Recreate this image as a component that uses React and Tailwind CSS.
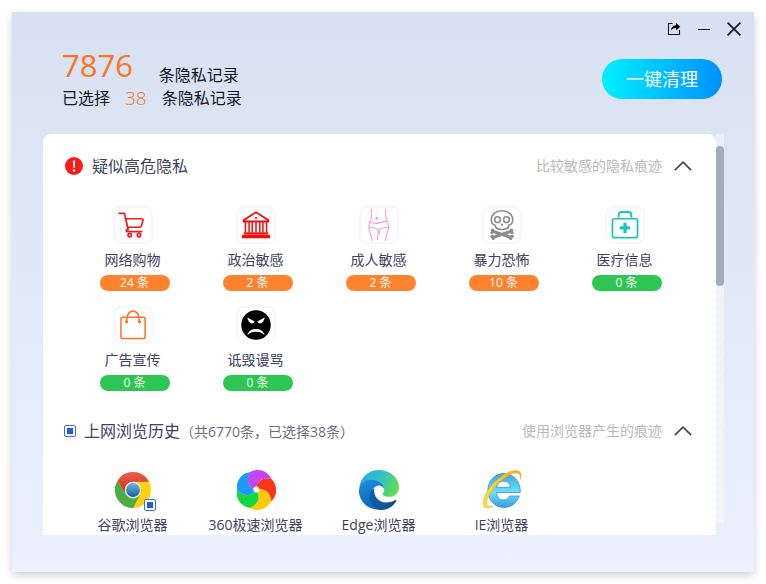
import React from "react";

/* ---------- line icons, 40 x 38 tiles ---------- */

const CartIcon = () => (
  <svg viewBox="0 0 40 38" className="h-full w-full" fill="none" stroke="#e81d1a" strokeWidth="1.900" strokeLinecap="round" strokeLinejoin="round">
    <path d="M4.500 6h5.200c.5 0 .8.300.9.700L14.500 24" />
    <path d="M12.300 12h17.200c1.300 0 1.900.8 1.600 2l-1.600 5.600c-.4 1.300-1.200 1.900-2.600 1.900H14.500" />
    <path d="M14.300 24c-1.400.1-2 .7-1.900 1.500.1.600.6.900 1.300.9h16.100" />
    <circle cx="16.300" cy="30.300" r="1.900" />
    <circle cx="26.700" cy="30.300" r="1.900" />
  </svg>
);

const InstitutionIcon = () => (
  <svg viewBox="0 0 40 38" className="h-full w-full" fill="none" stroke="#fb0a0a" strokeWidth="1.700" strokeLinejoin="round">
    <path d="M20 4.800 34 13.600v1.500H6v-1.500z" strokeWidth="2" />
    <circle cx="20" cy="11" r="1.300" fill="#fb0a0a" stroke="none" />
    <path d="M8.200 15.500v11.800M12.300 15.500v11.800M15.800 15.500v11.800M20 15.500v11.800M24.200 15.500v11.800M27.700 15.500v11.800M31.800 15.500v11.800" />
    <path d="M6.500 28.200h27" strokeWidth="2" />
    <path d="M5.300 30.300h29.400l.7 2.800H4.600z" fill="#fb0a0a" strokeWidth="1.200" />
  </svg>
);

const BodyIcon = () => (
  <svg viewBox="0 0 40 38" className="h-full w-full" fill="none" stroke="#fb9fd2" strokeWidth="1.300" strokeLinecap="round">
    <path d="M11.300 1.500c.8 6 .6 9.500-1 13-1.900 4-1.900 7.800-.8 11.500 1.100 3.500 2.400 6.500 2.700 10" />
    <path d="M27.700 1.500c-.8 6-.4 9.500 1.400 13 1.900 4 1.800 7.800.7 11.500-1 3.500-2.300 6.500-2.600 10" />
    <path d="M10 15c3.200 2.300 7.400 2.700 11 1.300 2.600-1 5.100-1 8.200-1.700" />
    <path d="M9 21.600c4.300-.4 8.400.9 10.700 3.900 2.400-3 6-4.300 10.500-3.900" />
    <path d="M19.300 25.500c-.7 3.500-1.200 6.300-1 10M19.900 25.500c.9 1 .9 2 .6 3.500" />
    <circle cx="17.500" cy="11.500" r="1" fill="#fb9fd2" />
  </svg>
);

const SkullIcon = () => (
  <svg viewBox="0 0 40 38" className="h-full w-full" fill="none" stroke="#8d8d8d" strokeWidth="1.800" strokeLinejoin="round">
    <path d="M20 3c-7 0-12 4.500-12 10.300 0 3.300 1.700 5.100 4.400 6.100.3 3 3 4.600 7.600 4.600s7.300-1.600 7.600-4.600c2.700-1 4.400-2.800 4.400-6.100C32 7.500 27 3 20 3z" />
    <circle cx="15" cy="13" r="3.200" />
    <circle cx="25" cy="13" r="3.200" />
    <circle cx="20" cy="18.600" r="1.300" fill="#8d8d8d" stroke="none" />
    <path d="M9.500 26 30.500 33M30.500 26 9.500 33" strokeWidth="3.400" />
    <g fill="#8d8d8d" stroke="none">
      <circle cx="9.500" cy="24.800" r="1.900" /><circle cx="8.700" cy="27.500" r="1.800" />
      <circle cx="30.500" cy="24.800" r="1.900" /><circle cx="31.300" cy="27.500" r="1.800" />
      <circle cx="8.700" cy="31.600" r="1.800" /><circle cx="10.200" cy="34" r="1.800" />
      <circle cx="31.300" cy="31.600" r="1.800" /><circle cx="29.800" cy="34" r="1.800" />
    </g>
  </svg>
);

const MedicalIcon = () => (
  <svg viewBox="0 0 40 38" className="h-full w-full" fill="none" stroke="#18c5c2" strokeWidth="1.900" strokeLinejoin="round">
    <rect x="6" y="12" width="28" height="21" rx="2" />
    <path d="M13 10.600V7.500c0-2 1-3 3-3h8c2 0 3 1 3 3v3.100" strokeWidth="2.200" />
    <path d="M20 16.500v11.600M14.200 22.300h11.600" strokeWidth="3.600" />
  </svg>
);

const BagIcon = () => (
  <svg viewBox="0 0 40 38" className="h-full w-full" fill="none" stroke="#ff7327" strokeWidth="1.700" strokeLinecap="round" strokeLinejoin="round">
    <rect x="6.500" y="10.300" width="27" height="23.800" rx="2" />
    <path d="M12.800 15c.2-7.500 2.800-11.500 7.200-11.500s7 4 7.200 11.500" />
    <circle cx="12.800" cy="15.500" r="1" fill="#ff7327" />
    <circle cx="27.200" cy="15.500" r="1" fill="#ff7327" />
  </svg>
);

const AngryIcon = () => (
  <svg viewBox="0 0 40 38" className="h-full w-full">
    <circle cx="20" cy="19" r="16.500" fill="#000" />
    <path d="M10.300 10.500l8.200 4.500c-.5 1.500-1.600 2.300-3.200 2.200-2.600-.2-4.300-3.100-5-6.700zM29.700 10.500l-8.200 4.500c.5 1.500 1.600 2.300 3.200 2.200 2.600-.2 4.300-3.100 5-6.700z" fill="#fff" />
    <path d="M10.300 30.500c1.500-5 4.900-7 9.700-7s8.200 2 9.700 7c-2.500-2.800-5.700-4-9.700-4s-7.200 1.200-9.700 4z" fill="#fff" />
  </svg>
);

/* ---------- browser logos, 40 x 40 ---------- */

const ChromeLogo = () => (
  <svg viewBox="0 0 40 40" className="h-10 w-10">
    <defs>
      <linearGradient id="cr" x1="0" y1="0" x2="0" y2="1"><stop offset="0" stopColor="#e8604f" /><stop offset="1" stopColor="#d8261d" /></linearGradient>
      <linearGradient id="cb" x1="0" y1="0" x2="0" y2="1"><stop offset="0" stopColor="#77b2e2" /><stop offset="1" stopColor="#165fa5" /></linearGradient>
    </defs>
    <circle cx="20" cy="20" r="18" fill="#fcd213" />
    <path d="M4.400 11A18 18 0 0 1 35.600 11L36 12H20A8.200 8.200 0 0 0 12.600 23.500z" fill="url(#cr)" />
    <path d="M4.400 11A18 18 0 0 0 20 38L27.500 24A8.200 8.200 0 0 1 12.900 24z" fill="#4aae48" />
    <path d="M35.600 11.800H20v3h17.200z" fill="#fcd213" />
    <circle cx="20" cy="20" r="8.200" fill="#eef0f2" />
    <circle cx="20" cy="20" r="6.900" fill="url(#cb)" />
  </svg>
);

const blades = [
  { angle: 0, color: "#c246f3" },
  { angle: 72, color: "#ff351c" },
  { angle: 144, color: "#ffc90a" },
  { angle: 216, color: "#13d73f" },
  { angle: 288, color: "#1b9afa" },
];

const PinwheelLogo = () => (
  <svg viewBox="0 0 40 40" className="h-10 w-10">
    {blades.map((b) => (
      <path
        key={b.color}
        d="M20 20C13 18 9 11 14.300 1.900C22-2 31.500.5 35.450 9C25.200 6.800 19.700 12.700 20 20z"
        fill={b.color}
        transform={`rotate(${b.angle} 20 20)`}
      />
    ))}
    <circle cx="20.300" cy="19.500" r="3" fill="#fff" />
  </svg>
);

const EdgeLogo = () => (
  <svg viewBox="0 0 40 40" className="h-10 w-10">
    <defs>
      <linearGradient id="eg" x1="0" y1=".3" x2="1" y2=".6"><stop offset="0" stopColor="#27a9e5" /><stop offset=".5" stopColor="#33c3c5" /><stop offset="1" stopColor="#63dd4b" /></linearGradient>
      <linearGradient id="eb" x1="0" y1="0" x2=".3" y2="1"><stop offset="0" stopColor="#1c8fdd" /><stop offset="1" stopColor="#0c68bd" /></linearGradient>
      <linearGradient id="ed" x1="0" y1="0" x2="1" y2="1"><stop offset="0" stopColor="#0c66b5" /><stop offset="1" stopColor="#124a8c" /></linearGradient>
    </defs>
    <path d="M.2 18C1.200 7.500 9.500 0 20 0c11.500 0 20 8 20 17.200 0 6-4.500 9.600-10 9.600-4.300 0-6.400-1.400-6.400-2.700 0-.8 1.600-1.500 1.600-4.700 0-4.500-5-9.500-12.500-9.500C7 9.900 2 13 .2 18z" fill="url(#eg)" />
    <path d="M.1 19.500C.8 13 6.500 9.700 12.700 9.700c8.300 0 12.500 5.500 12.500 9.400-1-2.300-3-3.700-5.300-3.700-4 .2-7.900 4.200-7.900 9.800 0 7 5.500 12.500 12.800 13.900C10.800 42.500-.7 32-.1 19.500z" fill="url(#eb)" />
    <path d="M15.300 18c-1.200 8.200 4.200 14.500 12 14.500 3.700 0 6.600-1 9-2.400.8-.4 1.500.3 1 1.100-3 5-8.700 8.700-14.300 8.700-7 0-12.700-6.700-12.700-13.200 0-3.500 1.800-6.700 5-8.700z" fill="url(#ed)" />
  </svg>
);

const IeLogo = () => (
  <svg viewBox="0 0 40 40" className="h-10 w-10">
    <defs>
      <linearGradient id="ib" x1="0" y1="0" x2="0" y2="1"><stop offset="0" stopColor="#3fa3dd" /><stop offset=".55" stopColor="#6be2fc" /><stop offset="1" stopColor="#3b9ce0" /></linearGradient>
      <linearGradient id="iy" x1="0" y1="1" x2="1" y2="0"><stop offset="0" stopColor="#fbdc49" /><stop offset=".5" stopColor="#fdd01f" /><stop offset="1" stopColor="#f3a81c" /></linearGradient>
    </defs>
    <path fillRule="evenodd" d="M22 3.500C13 3.500 5.800 11 5.800 20.500S13 37.500 22 37.500c7.300 0 13-4.500 15.300-11.500H27.500c-1.200 2.400-3.200 4-5.800 4-4.200 0-7.100-3-7.300-7.500h23.800C39 12.500 32 3.500 22 3.500zM14.600 17.300c.7-3.700 3.300-6 7.100-6s6.400 2.300 6.800 6z" fill="url(#ib)" stroke="#3793cf" strokeWidth=".8" />
    <path d="M38.500 9.500c1.200-4.500.7-7.200-2-8.500C30.500-1.500 18.500 5 10 15 2 24.500-.5 33 2 36.700c1.600 2.200 5.300 1.700 9.500-1-3.200 1-5.400.7-6.300-1C3.600 31 7 23.500 13.500 16 21 7.500 31 2 35.700 3.300c2.400.8 3 3 2.800 6.200z" fill="url(#iy)" stroke="#eaa51f" strokeWidth=".4" />
  </svg>
);

/* ---------- data ---------- */

const risks = [
  { name: "网络购物", count: 24, Icon: CartIcon },
  { name: "政治敏感", count: 2, Icon: InstitutionIcon },
  { name: "成人敏感", count: 2, Icon: BodyIcon },
  { name: "暴力恐怖", count: 10, Icon: SkullIcon },
  { name: "医疗信息", count: 0, Icon: MedicalIcon },
  { name: "广告宣传", count: 0, Icon: BagIcon },
  { name: "诋毁谩骂", count: 0, Icon: AngryIcon },
];

const browsers = [
  { name: "谷歌浏览器", Logo: ChromeLogo, picked: true },
  { name: "360极速浏览器", Logo: PinwheelLogo },
  { name: "Edge浏览器", Logo: EdgeLogo },
  { name: "IE浏览器", Logo: IeLogo },
];

/* ---------- parts ---------- */

const checkboxClass =
  "block h-3 w-3 shrink-0 appearance-none rounded-[2px] border border-[#3b68f6] bg-[#2457f0] bg-clip-content p-[2px] shadow-[inset_0_0_0_2px_#fff]";

function CollapseButton({ label }) {
  return (
    <button type="button" aria-label={label} className="ml-3 flex h-6 w-[18px] items-center justify-center">
      <svg viewBox="0 0 18 10" className="h-[10px] w-[18px]" fill="none" stroke="#40435f" strokeWidth="1.700">
        <path d="M.8 9.200 9 1.200l8.200 8" />
      </svg>
    </button>
  );
}

function RiskItem({ name, count, Icon }) {
  return (
    <li className="flex h-[100px] flex-col items-center">
      <div className="h-[38px] w-10 rounded-lg border-2 border-[#f8f8f9]">
        <Icon />
      </div>
      <span className="mt-1 text-sm leading-6 text-[#40435f]">{name}</span>
      <span
        className={`ml-1 mt-[3px] h-4 w-[70px] rounded-full text-center text-xs leading-4 text-white ${
          count > 0 ? "bg-[#ff822f]" : "bg-[#2dc653]"
        }`}
      >
        {count} 条
      </span>
    </li>
  );
}

export default function App() {
  return (
    <div className="flex h-screen flex-col bg-white p-3 font-['Open_Sans','Noto_Sans_CJK_SC',sans-serif]">
      <main className="flex min-h-0 flex-1 flex-col bg-linear-to-b from-[#d8e1f1] to-[#ebf1fe] pb-[37px] shadow-[0_3px_8px_rgba(0,0,0,0.2)]">
        <div className="flex h-[34px] items-center justify-end gap-4 pr-3">
          <button type="button" aria-label="分享" className="flex h-4 w-4 items-center justify-center">
            <svg viewBox="0 0 14 14" className="h-[14px] w-[14px]" fill="none" stroke="#15181f" strokeWidth="1.100">
              <path d="M5.500 1.500h-4v11h11V8" />
              <path d="M4 8.500C4.200 5.300 6 3.400 9 3.300V1l4.300 3.700L9 8.300V6C6.900 5.900 5.300 6.700 4 8.500z" fill="#000" stroke="none" />
            </svg>
          </button>
          <button type="button" aria-label="最小化" className="flex h-4 w-3 items-center justify-center">
            <span className="h-px w-3 bg-[#15181f]" />
          </button>
          <button type="button" aria-label="关闭" className="flex h-4 w-4 items-center justify-center">
            <svg viewBox="0 0 14 14" className="h-[14px] w-[14px]" stroke="#15181f" strokeWidth="1.700">
              <path d="M.6.600l12.800 12.800M13.400.600.600 13.400" />
            </svg>
          </button>
        </div>

        <header className="flex h-[88px] shrink-0 items-start justify-between pl-[50px] pr-8 text-[#15171c]">
          <div>
            <div className="flex h-10 items-end justify-between">
              <strong className="self-start text-[31px] font-normal leading-[38px] text-[#fd7421]">7876</strong>
              <span className="mr-[3px] leading-[22px]">条隐私记录</span>
            </div>
            <p className="flex h-6 items-center leading-6">
              已选择
              <strong className="mx-[15px] text-[19px] font-light leading-6 text-[#fd7421]">38</strong>
              条隐私记录
            </p>
          </div>
          <button
            type="button"
            className="mt-[13px] h-10 w-[120px] rounded-full bg-linear-to-r from-[#00f0ff] to-[#0090ff] text-lg text-white"
          >
            一键清理
          </button>
        </header>

        <div className="ml-[31px] mr-[30px] flex min-h-0 flex-1">
          <div className="min-w-0 flex-1 overflow-y-auto rounded-t-lg bg-white [scrollbar-width:none]">
            <section>
              <div className="flex h-16 items-center pl-[22px] pr-6">
                <svg viewBox="0 0 18 18" className="h-[18px] w-[18px]">
                  <circle cx="9" cy="9" r="9" fill="#fb1c18" />
                  <path d="M7.900 3.500h2.200l-.3 7.300H8.200z" fill="#fff" />
                  <circle cx="9" cy="13.500" r="1.200" fill="#fff" />
                </svg>
                <h2 className="ml-[9px] flex-1 text-base text-[#40435f]">疑似高危隐私</h2>
                <span className="text-sm text-[#b9b9bb]">比较敏感的隐私痕迹</span>
                <CollapseButton label="收起疑似高危隐私" />
              </div>
              <ul className="grid grid-cols-5 pl-7 pr-[30px] pt-2">
                {risks.map((r) => (
                  <RiskItem key={r.name} {...r} />
                ))}
              </ul>
            </section>

            <section>
              <div className="flex h-[50px] items-center pl-[21px] pr-6">
                <input id="history" type="checkbox" className={checkboxClass} />
                <h2 className="ml-2 flex-1 text-base text-[#40435f]">
                  <label htmlFor="history">上网浏览历史</label>
                  <span className="text-sm text-[#6b6e80]">（共6770条，已选择38条）</span>
                </h2>
                <span className="text-sm text-[#b9b9bb]">使用浏览器产生的痕迹</span>
                <CollapseButton label="收起上网浏览历史" />
              </div>
              <ul className="grid grid-cols-5 pl-7 pr-[30px] pt-[14px]">
                {browsers.map(({ name, Logo, picked }) => (
                  <li key={name} className="flex flex-col items-center">
                    <div className="relative h-10 w-10">
                      <Logo />
                      {picked && (
                        <input type="checkbox" aria-label={name} className={`${checkboxClass} absolute -bottom-px -right-[3px]`} />
                      )}
                    </div>
                    <span className="mt-[3px] text-sm leading-6 text-[#40435f]">{name}</span>
                  </li>
                ))}
              </ul>
            </section>
          </div>

          <div aria-hidden="true" className="mb-3 w-2 bg-[conic-gradient(#fff_25%,#e3ebf9_0_50%,#fff_0_75%,#e3ebf9_0)] bg-size-[2px_2px]">
            <div className="bg-[#eaf1fe] pt-3">
              <div className="h-[140px] rounded-full bg-[#a5acb8]" />
            </div>
          </div>
        </div>
      </main>
    </div>
  );
}
